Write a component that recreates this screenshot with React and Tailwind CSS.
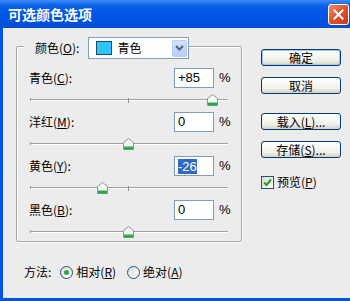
import React from "react";

const cjk = { fontFamily: '"Noto Sans CJK SC", "Liberation Sans", sans-serif' };

const rows = [
  { label: "青色", key: "C", value: "+85", num: 85 },
  { label: "洋红", key: "M", value: "0", num: 0 },
  { label: "黄色", key: "Y", value: "-26", num: -26, selected: true },
  { label: "黑色", key: "B", value: "0", num: 0 },
];

function Thumb() {
  return (
    <svg width="11" height="12" viewBox="0 0 11 12">
      <path d="M5.5 0.5 L10.5 4.5 L10.5 11.5 L0.5 11.5 L0.5 4.5 Z" fill="#f7f7f4" stroke="#8a9a8a" />
      <rect x="1" y="8.5" width="9" height="3" fill="#2fa84a" />
    </svg>
  );
}

function SliderRow({ row }) {
  const left = 98.5 + (row.num / 100) * 98.5;
  return (
    <div className="flex flex-col">
      <div className="flex items-center h-[20px] pl-[12px] pr-[12px]">
        <span className="flex-1 text-[12px] text-black" style={cjk}>
          {row.label}(<span className="underline">{row.key}</span>):
        </span>
        <div className="w-[40px] h-[20px] bg-white border border-[#7f9db9] flex items-center pl-[3px] text-[13px] text-black font-['Liberation_Sans']">
          {row.selected ? (
            <span className="bg-[#316ac5] text-white leading-[15px]">{row.value}</span>
          ) : (
            row.value
          )}
        </div>
        <span className="ml-[5px] w-[10px] text-[13px] text-black font-['Liberation_Sans']">%</span>
      </div>
      <div className="relative h-[24px] ml-[13px] w-[198px]">
        <div className="absolute left-0 right-0 top-[11px] h-[1px] bg-[#a0a0a0]" />
        <div className="absolute left-0 right-0 top-[12px] h-[1px] bg-white" />
        <div className="absolute left-0 top-[10px] w-[1px] h-[3px] bg-[#a0a0a0]" />
        <div className="absolute left-[98px] top-[10px] w-[1px] h-[5px] bg-[#909090]" />
        <div className="absolute top-[6px]" style={{ left: left - 5.5 }}>
          <Thumb />
        </div>
      </div>
    </div>
  );
}

function XpButton({ children, isDefault }) {
  return (
    <button
      type="button"
      className={
        "w-[80px] h-[17px] rounded-[3px] border border-[#003c74] bg-[linear-gradient(#ffffff,#f0f0ea_70%,#d6d0c5)] text-[12px] text-black leading-none flex items-center justify-center " +
        (isDefault ? "shadow-[inset_0_0_0_1px_#a8c6f5]" : "")
      }
      style={cjk}
    >
      {children}
    </button>
  );
}

function Radio({ checked }) {
  return (
    <span className="w-[13px] h-[13px] rounded-full border border-[#1c5180] bg-[linear-gradient(135deg,#dcdcd5,#ffffff)] flex items-center justify-center">
      {checked && <span className="w-[5px] h-[5px] rounded-full bg-[#2fa84a]" />}
    </span>
  );
}

export default function App() {
  return (
    <div className="w-[350px] h-[301px] flex flex-col overflow-hidden select-none">
      <div className="h-[28px] flex items-center justify-between pl-[8px] pr-[1px] bg-[linear-gradient(#3d8bf5,#0a5fe8_20%,#0055e5_60%,#0050d8_90%,#0a4ccc)]">
        <span className="text-white text-[14px] font-bold" style={cjk}>
          可选颜色选项
        </span>
        <div className="w-[21px] h-[21px] rounded-[3px] border border-white bg-[linear-gradient(135deg,#f08a6a,#e0522c_50%,#c4391a)] flex items-center justify-center">
          <svg width="11" height="11" viewBox="0 0 11 11">
            <path d="M1.5 1.5 L9.5 9.5 M9.5 1.5 L1.5 9.5" stroke="white" strokeWidth="2" strokeLinecap="square" />
          </svg>
        </div>
      </div>
      <div className="flex-1 flex bg-[#ececec] border-l-[3px] border-b-[3px] border-[#0054e3]">
        <div className="flex flex-col pl-[13px] pt-[18px]">
          <div className="w-[226px] h-[196px] border border-[#a7a7a7] rounded-[2px] shadow-[1px_1px_0_#ffffff,inset_1px_1px_0_#ffffff] flex flex-col">
            <div className="flex items-center h-[22px] -mt-[10px] ml-[7px]">
              <span className="bg-[#ececec] h-[22px] pl-[11px] pr-[9px] flex items-center text-[12px] text-black" style={cjk}>
                颜色(<span className="underline">O</span>):
              </span>
              <div className="w-[101px] h-[22px] bg-white border border-[#7f9db9] flex items-center pl-[7px] pr-[1px]">
                <span className="w-[16px] h-[14px] bg-[#2ec6f8] border border-[#1a4a66]" />
                <span className="ml-[5px] flex-1 text-[12px] text-black" style={cjk}>
                  青色
                </span>
                <span className="w-[15px] h-[17px] rounded-[2px] bg-[linear-gradient(#d4e2fc,#b6cdf8)] border border-[#b8cdf6] flex items-center justify-center">
                  <svg width="9" height="6" viewBox="0 0 9 6">
                    <path d="M1 1 L4.5 4.5 L8 1" stroke="#4d6185" strokeWidth="2" fill="none" />
                  </svg>
                </span>
              </div>
            </div>
            <div className="flex flex-col mt-[9px]">
              {rows.map((r) => (
                <SliderRow key={r.key} row={r} />
              ))}
            </div>
          </div>
          <div className="flex items-center h-[16px] mt-[22px] pl-[8px] text-[12px] text-black" style={cjk}>
            <span>方法:</span>
            <span className="ml-[9px]">
              <Radio checked />
            </span>
            <span className="ml-[3px]">
              相对(<span className="underline">R</span>)
            </span>
            <span className="ml-[11px]">
              <Radio />
            </span>
            <span className="ml-[3px]">
              绝对(<span className="underline">A</span>)
            </span>
          </div>
        </div>
        <div className="flex flex-col ml-[19px] pt-[21px]">
          <XpButton isDefault>确定</XpButton>
          <div className="mt-[11px]">
            <XpButton>取消</XpButton>
          </div>
          <div className="mt-[19px]">
            <XpButton>
              载入(<span className="underline">L</span>)...
            </XpButton>
          </div>
          <div className="mt-[11px]">
            <XpButton>
              存储(<span className="underline">S</span>)...
            </XpButton>
          </div>
          <div className="mt-[15px] flex items-center">
            <span className="w-[13px] h-[13px] border border-[#1c5180] bg-[linear-gradient(135deg,#dcdcd5,#ffffff)] flex items-center justify-center">
              <svg width="9" height="9" viewBox="0 0 9 9">
                <path d="M1 4.5 L3.5 7 L8 1.5" stroke="#21a121" strokeWidth="2" fill="none" />
              </svg>
            </span>
            <span className="ml-[3px] text-[12px] text-black" style={cjk}>
              预览(<span className="underline">P</span>)
            </span>
          </div>
        </div>
      </div>
    </div>
  );
}
